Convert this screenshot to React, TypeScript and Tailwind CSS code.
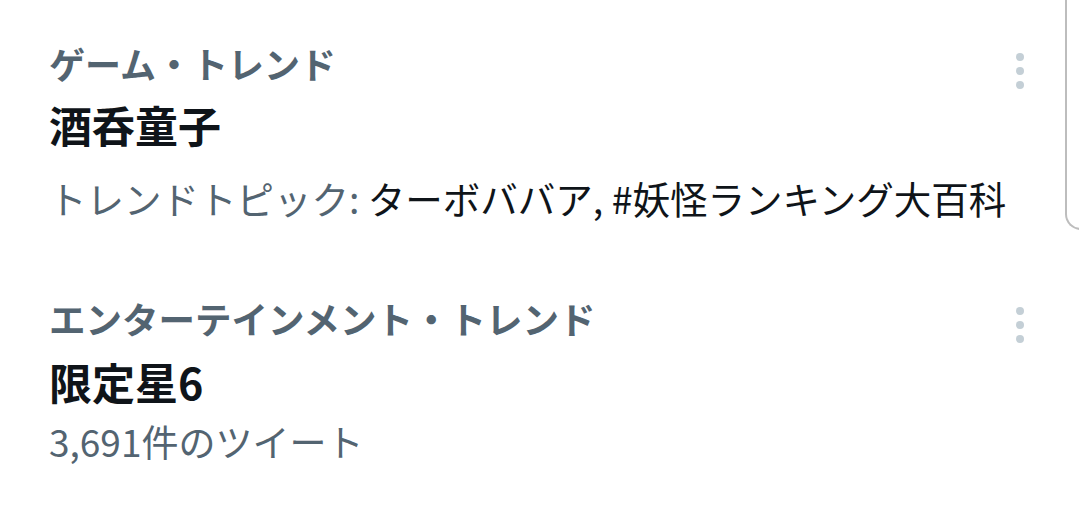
import React from "react";

const font = { fontFamily: '"Noto Sans CJK JP", "Noto Sans", sans-serif' };

function Dots({ className }: { className: string }) {
  return (
    <div className={"flex flex-col items-center gap-[6px] " + className}>
      <span className="block w-[8px] h-[8px] rounded-full bg-[#c4cfd6]" />
      <span className="block w-[8px] h-[8px] rounded-full bg-[#c4cfd6]" />
      <span className="block w-[8px] h-[8px] rounded-full bg-[#c4cfd6]" />
    </div>
  );
}

export default function App() {
  return (
    <div
      className="relative w-[1079px] h-[528px] bg-white overflow-hidden"
      style={font}
    >
      <div className="absolute left-[1065px] top-[-20px] w-[40px] h-[250px] border-l-2 border-b-2 border-[#bdbdbd] rounded-bl-[16px]" />

      <div className="flex flex-col pl-[49px] pr-[55px]">
        {/* Trend 1 */}
        <div className="flex justify-between pt-[38px]">
          <div className="flex flex-col">
            <div className="h-[50px] leading-[50px] text-[36px] font-bold text-[#536471] whitespace-nowrap">
              ゲーム・トレンド
            </div>
            <div className="mt-[7px] h-[58px] leading-[58px] text-[43px] font-bold text-[#0f1419] whitespace-nowrap">
              酒呑童子
            </div>
            <div className="mt-[20px] h-[50px] leading-[50px] text-[37.5px] text-[#536471] whitespace-nowrap">
              トレンドトピック:{" "}
              <span className="text-[#0f1419]">ターボババア, #妖怪ランキング大百科</span>
            </div>
          </div>
          <Dots className="pt-[15px]" />
        </div>

        {/* Trend 2 */}
        <div className="flex justify-between pt-[71px]">
          <div className="flex flex-col">
            <div className="h-[50px] leading-[50px] text-[36.5px] font-bold text-[#536471] whitespace-nowrap">
              エンターテインメント・トレンド
            </div>
            <div className="mt-[8px] h-[58px] leading-[58px] text-[43px] font-bold text-[#0f1419] whitespace-nowrap">
              限定星6
            </div>
            <div className="mt-[6px] h-[50px] leading-[50px] text-[37px] text-[#536471] whitespace-nowrap">
              3,691件のツイート
            </div>
          </div>
          <Dots className="pt-[13px]" />
        </div>
      </div>
    </div>
  );
}
